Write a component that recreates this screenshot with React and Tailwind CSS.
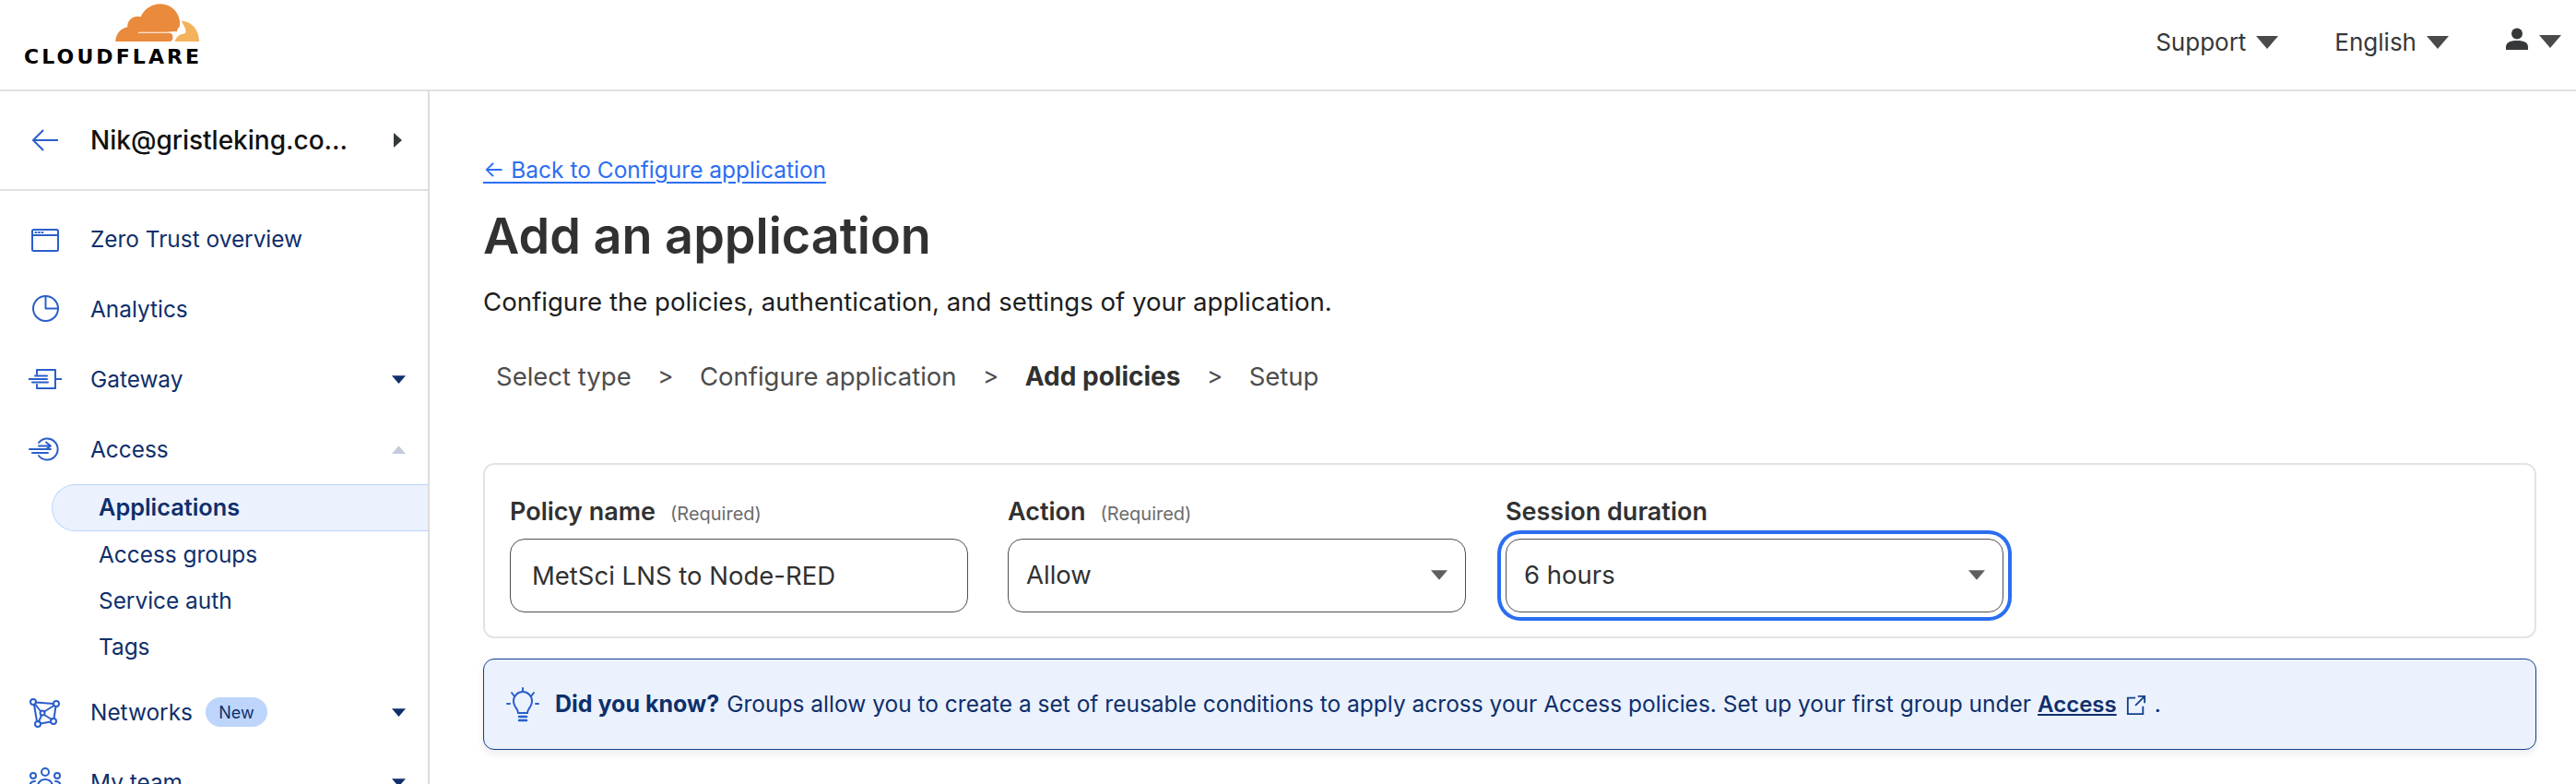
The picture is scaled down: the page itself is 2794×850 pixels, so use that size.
const INTER = 'font-["Inter",sans-serif]';

function Caret({ up, className = '' }) {
  return (
    <svg width="24" height="14" viewBox="0 0 24 14" className={className} fill="currentColor">
      <path d={up ? 'M12 0 24 14H0Z' : 'M0 0h24L12 14Z'} />
    </svg>
  );
}

function Logo() {
  return (
    <div className="flex h-full w-[240px] flex-col">
      <svg width="240" height="48" viewBox="0 0 720 144" className="shrink-0">
        <path
          fill="#e98a3d"
          d="M376 135C376 112 392 92 415 88 412 66 436 47 458 55 470 28 495 13 522 13 556 13 581 38 585 70 587 84 582 96 575 104L450 104V107H552C566 108 566 135 552 135Z"
        />
        <path
          fill="#f4b25c"
          d="M590 68C622 68 648 96 648 135H569C572 122 582 111 597 110 603 109 606 104 604 98 602 88 596 78 590 68Z"
        />
        <path fill="#fff" d="M580 88 583 102 600 105 583 108 568 128 576 106 540 104 576 102Z" />
      </svg>
      <span className={'mt-[3px] pl-[26px] font-["DejaVu_Sans",sans-serif] text-[22px] leading-[22px] font-bold tracking-[3.1px] text-black'}>
        CLOUDFLARE
      </span>
    </div>
  );
}

function TopMenu({ label, className = '' }) {
  return (
    <div className={'flex items-center gap-[11px] text-[26px] text-[#36393a] ' + className}>
      <span>{label}</span>
      <Caret className="text-[#4a4a4a]" />
    </div>
  );
}

function Header() {
  return (
    <header className="flex h-[99px] items-start justify-between border-b-2 border-[#e0e0e0]">
      <Logo />
      <div className="flex pt-[26px] pr-[16px]">
        <TopMenu label="Support" className="mr-[61px]" />
        <TopMenu label="English" className="mr-[62px]" />
        <div className="flex items-center gap-[12px] text-[#36393a]">
          <svg width="24" height="24" viewBox="0 0 24 24" fill="currentColor" className="-mt-[8px]">
            <circle cx="12" cy="6.500" r="6" />
            <path d="M0 24v-3c0-4.500 4-7 12-7s12 2.500 12 7v3Z" />
          </svg>
          <Caret className="-mt-[2px] text-[#4a4a4a]" />
        </div>
      </div>
    </header>
  );
}

const iconProps = {
  width: 36,
  height: 36,
  viewBox: '0 0 36 36',
  fill: 'none',
  stroke: '#2a5fc9',
  strokeWidth: 2,
  strokeLinecap: 'round',
  strokeLinejoin: 'round',
};

function WindowIcon() {
  return (
    <svg {...iconProps}>
      <rect x="4" y="8" width="28" height="23" rx="1.500" />
      <path d="M4 14h28" />
      <path d="M7.500 11h1M11 11h1M14.500 11h1" />
    </svg>
  );
}

function PieIcon() {
  return (
    <svg {...iconProps}>
      <circle cx="18.500" cy="17.500" r="13.500" />
      <path d="M18.500 4v13.500H32" />
    </svg>
  );
}

function GatewayIcon() {
  return (
    <svg {...iconProps}>
      <path d="M9 13V8h20v20H9v-4" />
      <path d="M29 18h7M0 18h20M4 21.500h17M7 14.500h13" />
    </svg>
  );
}

function AccessIcon() {
  return (
    <svg {...iconProps}>
      <path d="M11 11a11.500 11.500 0 1 1 0 14" />
      <path d="M1 18h23M4 22h17M11 14.500h13M19 10.500l5 4-5 3.500" />
    </svg>
  );
}

function NetworkIcon() {
  return (
    <svg {...iconProps}>
      <circle cx="5" cy="7" r="3" />
      <circle cx="30" cy="9" r="3" />
      <circle cx="27" cy="28" r="3" />
      <circle cx="10" cy="31" r="3" />
      <circle cx="15" cy="19" r="2.500" />
      <path d="M8 7.500 27 9M6 10l3 18M29.500 12l-2 13M24 28.500 13 30.500M7 9.500l6 7.500M27.500 11 17 17.500M17 21l8 5M14 21.500l-3 7" />
    </svg>
  );
}

function TeamIcon() {
  return (
    <svg {...iconProps}>
      <circle cx="18" cy="7" r="4" />
      <circle cx="5" cy="11" r="3" />
      <circle cx="31" cy="11" r="3" />
      <path d="M9 28c0-9 3-13 9-13s9 4 9 13M1 24c0-4 1.500-7 6-7M35 24c0-4-1.500-7-6-7" />
    </svg>
  );
}

function BackArrow() {
  return (
    <svg width="29" height="24" viewBox="0 0 29 24" fill="none" stroke="#2a5fc9" strokeWidth="2">
      <path d="M29 12H2M13 1 2 12l11 11" />
    </svg>
  );
}

function NavItem({ icon: Icon, label, caret, badge }) {
  return (
    <div className="relative flex h-[76px] items-center pr-[24px] pl-[31px] text-[24.4px] text-[#0f2f6b]">
      <span className="flex w-[67px] shrink-0 items-center">
        <Icon />
      </span>
      <span>{label}</span>
      {badge && (
        <span className="ml-[14px] flex h-[32px] w-[67px] items-center justify-center rounded-full bg-[#bdd5fb] text-[18px]">
          {badge}
        </span>
      )}
      {caret === 'down' && <Caret className="ml-auto h-[9px] w-[15px] text-[#0f2f6b]" />}
      {caret === 'up' && <Caret up className="ml-auto h-[9px] w-[15px] text-[#c3ccda]" />}
    </div>
  );
}

function SubItem({ label, active }) {
  if (active) {
    return (
      <div className="ml-[56px] flex h-[51px] items-center rounded-l-[26px] border border-r-0 border-[#bcd4fb] bg-[#ebf2fe] pb-[2px] pl-[50px] text-[25.300px] font-semibold text-[#0f2f6b]">
        {label}
      </div>
    );
  }
  return <div className="flex h-[50px] items-center pl-[107px] text-[24.4px] text-[#0f2f6b]">{label}</div>;
}

function Sidebar() {
  return (
    <aside className="h-full w-[466px] shrink-0 overflow-hidden border-r-2 border-[#dcdcdc]">
      <div className="flex h-[108px] items-center border-b-2 border-[#e0e0e0] pr-[24px] pl-[34px]">
        <span className="flex w-[64px] items-center">
          <BackArrow />
        </span>
        <span className="text-[28px] font-medium text-[#111]">Nik@gristleking.co...</span>
        <svg width="9" height="16" viewBox="0 0 9 16" className="mr-[4px] ml-auto text-[#36393a]" fill="currentColor">
          <path d="M0 0l9 8-9 8Z" />
        </svg>
      </div>
      <div className="pt-[14px]">
        <NavItem icon={WindowIcon} label="Zero Trust overview" />
        <NavItem icon={PieIcon} label="Analytics" />
        <NavItem icon={GatewayIcon} label="Gateway" caret="down" />
        <NavItem icon={AccessIcon} label="Access" caret="up" />
        <SubItem label="Applications" active />
        <SubItem label="Access groups" />
        <SubItem label="Service auth" />
        <SubItem label="Tags" />
        <div className="h-[8px]" />
        <NavItem icon={NetworkIcon} label="Networks" caret="down" badge="New" />
        <NavItem icon={TeamIcon} label="My team" caret="down" />
      </div>
    </aside>
  );
}

function FieldLabel({ label, required }) {
  return (
    <div className="flex h-[34px] items-baseline">
      <span className="text-[27px] font-semibold text-[#313131]">{label}</span>
      {required && <span className="ml-[16px] text-[20px] text-[#6b6b6b]">(Required)</span>}
    </div>
  );
}

function SelectBox({ value, focused, width }) {
  return (
    <div
      className={
        'relative flex h-[80px] items-center rounded-[16px] border border-[#4f4f4f] bg-white pl-[19px] text-[27.5px] text-[#313131] ' +
        width +
        (focused ? ' shadow-[0_0_0_5px_#fff,0_0_0_9px_#2c6ef2]' : '')
      }
    >
      {value}
      <Caret className="absolute top-[33px] right-[19px] h-[11px] w-[18px] text-[#5f5f5f]" />
    </div>
  );
}

function Stepper() {
  const sep = <span className="mx-[28.500px] text-[26px] text-[#4d4d4d]">&gt;</span>;
  return (
    <div className="mt-[43px] flex items-center pl-[14px] text-[27.5px] leading-[36px] text-[#4d4d4d]">
      <span>Select type</span>
      {sep}
      <span>Configure application</span>
      {sep}
      <span className="text-[28px] font-bold text-[#313131]">Add policies</span>
      {sep}
      <span>Setup</span>
    </div>
  );
}

function DidYouKnow() {
  return (
    <div className="mt-[22px] flex h-[99px] items-center rounded-[12px] border border-[#143f8a] bg-[#ebf2fe] pl-[23px] text-[24.5px] text-[#0f2f6b] shadow-[0_4px_8px_rgba(0,0,0,0.08)]">
      <svg width="38" height="38" viewBox="0 0 38 38" fill="none" stroke="#2a5fc9" strokeWidth="2" strokeLinecap="round" className="mr-[16px] shrink-0">
        <path d="M19 1v4M7 6l3 4M31 6l-3 4M2 18h3M33 18h3" />
        <path d="M14 28c0-5-5-6-5-13a10 10 0 0 1 20 0c0 7-5 8-5 13Z" />
        <path d="M15 32h8M15 36h8" strokeWidth="2.500" />
      </svg>
      <span className="text-[25px] font-bold">Did you know?</span>
      <span className="ml-[8px]">
        Groups allow you to create a set of reusable conditions to apply across your Access policies. Set up your first group under
      </span>
      <a href="#" className="ml-[7px] text-[24px] font-semibold underline">
        Access
      </a>
      <svg width="22" height="22" viewBox="0 0 24 24" fill="none" stroke="#143f8a" strokeWidth="2" className="mr-[9px] ml-[10px]">
        <path d="M11 4H2v19h18v-9M11 13 22 2M14 2h8v8" />
      </svg>
      <span>.</span>
    </div>
  );
}

export default function App() {
  return (
    <div className={'flex h-[850px] w-[2794px] flex-col overflow-hidden bg-white ' + INTER}>
      <Header />
      <div className="flex min-h-0 flex-1">
        <Sidebar />
        <main className="min-w-0 flex-1 pr-[43px] pl-[58px]">
          <a href="#" className="mt-[67px] block text-[24.5px] leading-[36px] text-[#2c6ef2] underline underline-offset-4">
            ← Back to Configure application
          </a>
          <h1 className="mt-[22px] text-[54px] leading-[64px] font-semibold text-[#313131]">Add an application</h1>
          <p className="mt-[19px] text-[27.6px] leading-[40px] text-[#1d1d1d]">
            Configure the policies, authentication, and settings of your application.
          </p>
          <Stepper />
          <section className="mt-[76px] flex h-[190px] gap-[43px] rounded-[12px] border-2 border-[#e3e3e3] pt-[31px] pl-[27px]">
            <div>
              <FieldLabel label="Policy name" required />
              <input
                readOnly
                value="MetSci LNS to Node-RED"
                className="mt-[15px] h-[80px] w-[497px] rounded-[16px] border border-[#4f4f4f] pl-[23px] text-[27.5px] text-[#313131]"
              />
            </div>
            <div>
              <FieldLabel label="Action" required />
              <div className="mt-[15px]">
                <SelectBox value="Allow" width="w-[497px]" />
              </div>
            </div>
            <div>
              <FieldLabel label="Session duration" />
              <div className="mt-[15px]">
                <SelectBox value="6 hours" width="w-[540px]" focused />
              </div>
            </div>
          </section>
          <DidYouKnow />
        </main>
      </div>
    </div>
  );
}
